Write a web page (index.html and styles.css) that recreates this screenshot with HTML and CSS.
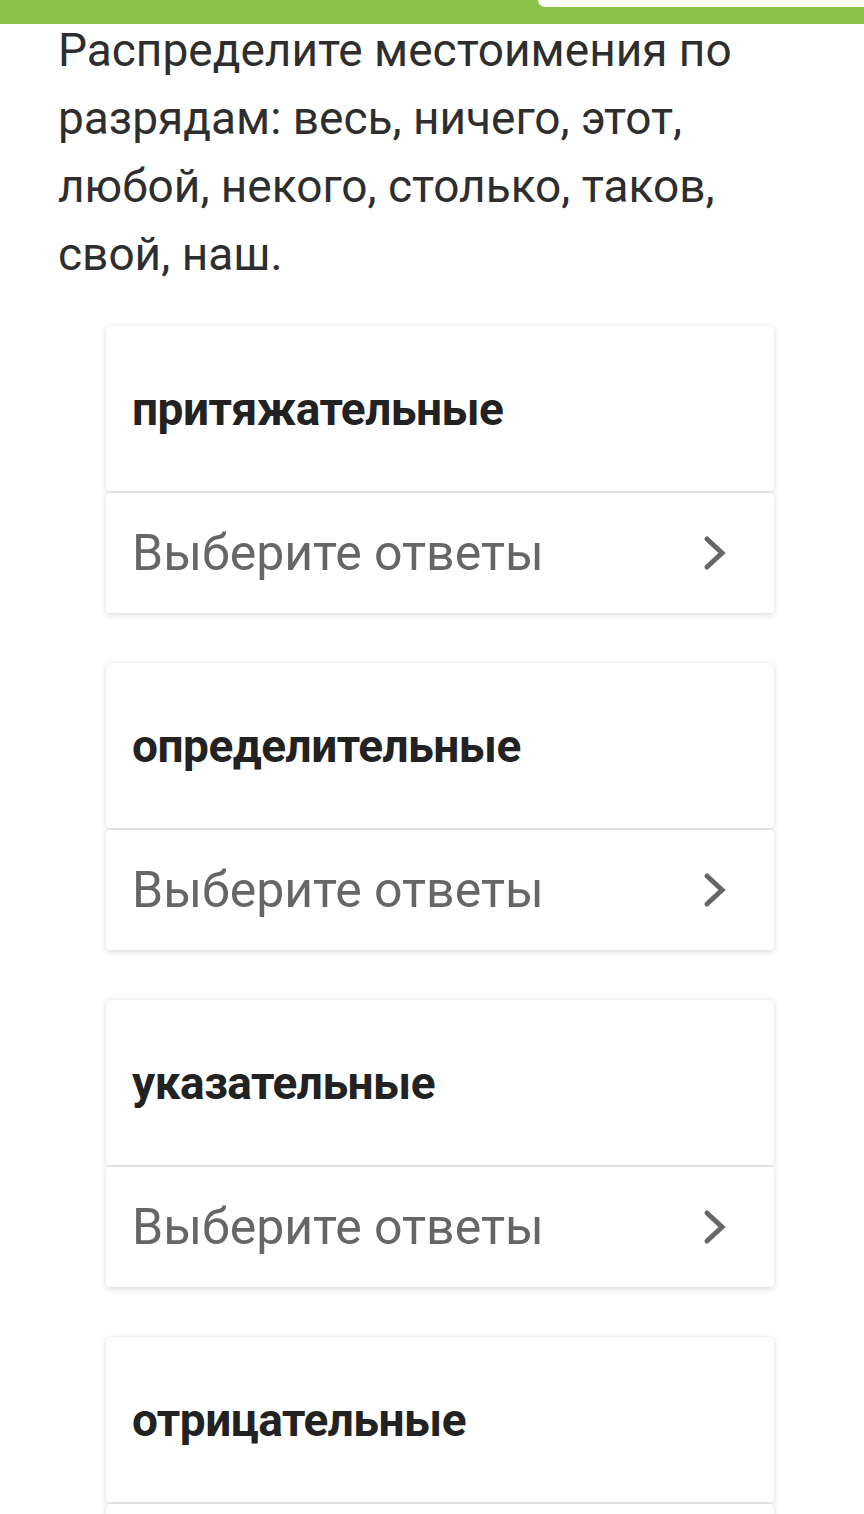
FILE: index.html
```html
<!DOCTYPE html>
<html lang="ru">
<head>
<meta charset="utf-8">
<title>Местоимения</title>
<link rel="stylesheet" href="styles.css">
</head>
<body>
<header class="topbar">
  <div class="topbar-search"></div>
</header>
<main class="page">
  <p class="question">Распределите местоимения по разрядам: весь, ничего, этот, любой, некого, столько, таков, свой, наш.</p>
  <section class="groups">
    <div class="group">
      <div class="card card-head"><span class="head-text">притяжательные</span></div>
      <div class="card card-select"><span class="select-text">Выберите ответы</span>
        <svg class="chev" viewBox="0 0 26 38" width="26" height="38"><path d="M5 5 L20 19 L5 33" fill="none" stroke="#666" stroke-width="5" stroke-linecap="round" stroke-linejoin="miter"/></svg>
      </div>
    </div>
    <div class="group">
      <div class="card card-head"><span class="head-text">определительные</span></div>
      <div class="card card-select"><span class="select-text">Выберите ответы</span>
        <svg class="chev" viewBox="0 0 26 38" width="26" height="38"><path d="M5 5 L20 19 L5 33" fill="none" stroke="#666" stroke-width="5" stroke-linecap="round" stroke-linejoin="miter"/></svg>
      </div>
    </div>
    <div class="group">
      <div class="card card-head"><span class="head-text">указательные</span></div>
      <div class="card card-select"><span class="select-text">Выберите ответы</span>
        <svg class="chev" viewBox="0 0 26 38" width="26" height="38"><path d="M5 5 L20 19 L5 33" fill="none" stroke="#666" stroke-width="5" stroke-linecap="round" stroke-linejoin="miter"/></svg>
      </div>
    </div>
    <div class="group">
      <div class="card card-head"><span class="head-text">отрицательные</span></div>
      <div class="card card-select"></div>
    </div>
  </section>
</main>
</body>
</html>
```
FILE: styles.css
```css
html, body {
  margin: 0;
  padding: 0;
  background: #fff;
}
body {
  font-family: Roboto, "Noto Sans", sans-serif;
  color: #333;
  overflow: hidden;
  height: 1514px;
}
.topbar {
  position: absolute;
  top: 0;
  left: 0;
  right: 0;
  height: 24px;
  background: #8bc34a;
  display: flex;
  justify-content: flex-end;
  align-items: flex-start;
  z-index: 2;
}
.topbar-search {
  width: 326px;
  height: 7px;
  background: #fff;
  border-bottom-left-radius: 7px;
}
.page {
  padding: 16px 0 0 58px;
}
.question {
  margin: 0;
  width: 720px;
  font-size: 46px;
  line-height: 68px;
  color: #2e2e2e;
}
.groups {
  margin: 38px 0 0 48px;
  width: 668px;
  display: flex;
  flex-direction: column;
  gap: 50px;
}
.group {
  display: flex;
  flex-direction: column;
  gap: 2px;
}
.card {
  background: #fff;
  border-radius: 4px;
  box-shadow: 0 2px 7px rgba(0,0,0,0.13), 0 0 3px rgba(0,0,0,0.06);
  display: flex;
  align-items: center;
  padding: 0 26px;
}
.card-head {
  height: 165px;
}
.card-select {
  height: 120px;
  justify-content: space-between;
  padding-right: 46px;
}
.head-text {
  font-weight: 700;
  font-size: 46px;
  color: #222;
  letter-spacing: -0.5px;
}
.select-text {
  font-size: 50px;
  color: #666;
}
.chev {
  display: block;
}
```
